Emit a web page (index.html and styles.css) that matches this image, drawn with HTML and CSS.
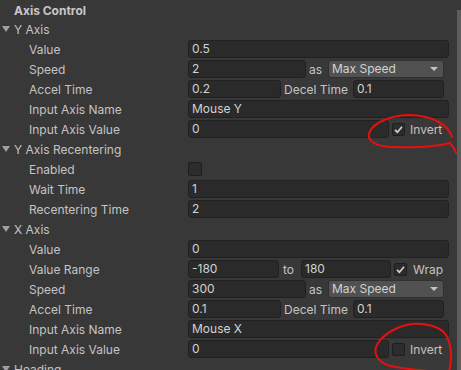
FILE: index.html
```html
<!DOCTYPE html>
<html lang="en">
  <head>
    <meta charset="UTF-8" />
    <meta name="viewport" content="width=device-width, initial-scale=1.0" />
    <title>Axis Control</title>
    <link rel="stylesheet" href="styles.css">
  </head>
  <body>
    <div class="inspector">
      <div class="title">Axis Control</div>

      <div class="row group"><span class="fold"></span>Y Axis</div>
      <div class="row"><span class="label">Value</span><span class="field wide">0.5</span></div>
      <div class="row">
        <span class="label">Speed</span>
        <span class="field speed">2</span>
        <span class="mid as">as</span>
        <span class="dropdown">Max Speed<span class="caret"></span></span>
      </div>
      <div class="row">
        <span class="label">Accel Time</span>
        <span class="field accel">0.2</span>
        <span class="mid decel">Decel Time</span>
        <span class="field decel-field">0.1</span>
      </div>
      <div class="row"><span class="label">Input Axis Name</span><span class="field wide">Mouse Y</span></div>
      <div class="row">
        <span class="label">Input Axis Value</span>
        <span class="field axis-value">0</span>
        <span class="toggle checked"><svg width="13" height="13" viewBox="0 0 13 13"><polyline points="3,6.8 5.4,9.2 10,3.8" /></svg></span>
        <span class="toggle-label">Invert</span>
      </div>

      <div class="row group"><span class="fold"></span>Y Axis Recentering</div>
      <div class="row"><span class="label">Enabled</span><span class="toggle first"></span></div>
      <div class="row"><span class="label">Wait Time</span><span class="field wide">1</span></div>
      <div class="row"><span class="label">Recentering Time</span><span class="field wide">2</span></div>

      <div class="row group"><span class="fold"></span>X Axis</div>
      <div class="row"><span class="label">Value</span><span class="field wide">0</span></div>
      <div class="row">
        <span class="label">Value Range</span>
        <span class="field range-min">-180</span>
        <span class="mid to">to</span>
        <span class="field range-max">180</span>
        <span class="toggle checked"><svg width="13" height="13" viewBox="0 0 13 13"><polyline points="3,6.8 5.4,9.2 10,3.8" /></svg></span>
        <span class="toggle-label wrap">Wrap</span>
      </div>
      <div class="row">
        <span class="label">Speed</span>
        <span class="field speed">300</span>
        <span class="mid as">as</span>
        <span class="dropdown">Max Speed<span class="caret"></span></span>
      </div>
      <div class="row">
        <span class="label">Accel Time</span>
        <span class="field accel">0.1</span>
        <span class="mid decel">Decel Time</span>
        <span class="field decel-field">0.1</span>
      </div>
      <div class="row"><span class="label">Input Axis Name</span><span class="field wide">Mouse X</span></div>
      <div class="row">
        <span class="label">Input Axis Value</span>
        <span class="field axis-value">0</span>
        <span class="toggle"></span>
        <span class="toggle-label">Invert</span>
      </div>

      <div class="row group"><span class="fold"></span>Heading</div>
    </div>

    <div class="scrollbar"></div>

    <!-- hand drawn red marks over the two Invert toggles -->
    <svg class="marks" width="461" height="370" viewBox="0 0 461 370">
      <path d="M452,137 C448,124 432,116 411,115 C393,115 376,121 370,131 C365,141 377,147 393,147 C415,148 438,146 450,143 C453,146 455,150 456,153" />
      <path d="M449,372 C452,360 452,345 446,335 C440,326 425,323 412,324 C398,326 385,333 378,343 C372,352 377,362 390,366 C405,369 425,371 445,372" />
    </svg>
  </body>
</html>
```

FILE: styles.css
```css
body {
  margin: 0;
  width: 461px;
  height: 370px;
  overflow: hidden;
  background: #383838;
  font-family: Inter, "Noto Sans", sans-serif;
  font-size: 12px;
  color: #c4c4c4;
  position: relative;
}
.inspector {
  display: flex;
  flex-direction: column;
}
.title {
  height: 19px;
  box-sizing: border-box;
  padding: 3px 0 0 14px;
  line-height: 16px;
  font-weight: bold;
  color: #c8c8c8;
}
.row {
  display: flex;
  align-items: center;
  height: 20px;
  flex: none;
}
.group {
  padding-left: 2px;
}
.fold {
  width: 0;
  height: 0;
  border-left: 4px solid transparent;
  border-right: 4px solid transparent;
  border-top: 6px solid #a0a0a0;
  margin-right: 4px;
}
.label {
  width: 188px;
  box-sizing: border-box;
  padding-left: 29px;
  flex: none;
}
.field {
  height: 18px;
  box-sizing: border-box;
  background: #2a2a2a;
  border: 1px solid #212121;
  border-radius: 3px;
  padding-left: 3px;
  line-height: 16px;
  color: #d2d2d2;
  flex: none;
}
.wide {
  width: 261px;
}
.speed {
  width: 118px;
}
.accel {
  width: 93px;
}
.decel-field {
  width: 91px;
}
.axis-value {
  width: 201px;
}
.range-min {
  width: 91px;
}
.range-max {
  width: 90px;
}
.mid {
  box-sizing: border-box;
  flex: none;
}
.as {
  width: 22px;
  padding-left: 3px;
}
.decel {
  width: 72px;
  padding-left: 3px;
}
.to {
  width: 22px;
  padding-left: 4px;
}
.dropdown {
  position: relative;
  width: 116px;
  height: 18px;
  box-sizing: border-box;
  background: #515151;
  border: 1px solid #303030;
  border-radius: 3px;
  padding-left: 3px;
  line-height: 16px;
  color: #d2d2d2;
  flex: none;
}
.caret {
  position: absolute;
  right: 5px;
  top: 6px;
  width: 0;
  height: 0;
  border-left: 4px solid transparent;
  border-right: 4px solid transparent;
  border-top: 4px solid #c4c4c4;
}
.toggle {
  width: 13px;
  height: 13px;
  box-sizing: border-box;
  background: #2c2c2c;
  border: 1px solid #1e1e1e;
  border-radius: 2px;
  margin-left: 3px;
  flex: none;
  display: flex;
}
.toggle svg {
  margin: -1px;
}
.toggle polyline {
  fill: none;
  stroke: #d0d0d0;
  stroke-width: 1.7;
}
.toggle.first {
  margin-left: 0;
  width: 14px;
  height: 14px;
}
.toggle-label {
  margin-left: 5px;
}
.wrap {
  margin-left: 6px;
}
.scrollbar {
  position: absolute;
  right: 0;
  top: 10px;
  bottom: 0;
  width: 4px;
  background: #5c5c5c;
}
.marks {
  position: absolute;
  left: 0;
  top: 0;
  pointer-events: none;
}
.marks path {
  fill: none;
  stroke: #e8100f;
  stroke-width: 2;
  stroke-linecap: round;
}
```
